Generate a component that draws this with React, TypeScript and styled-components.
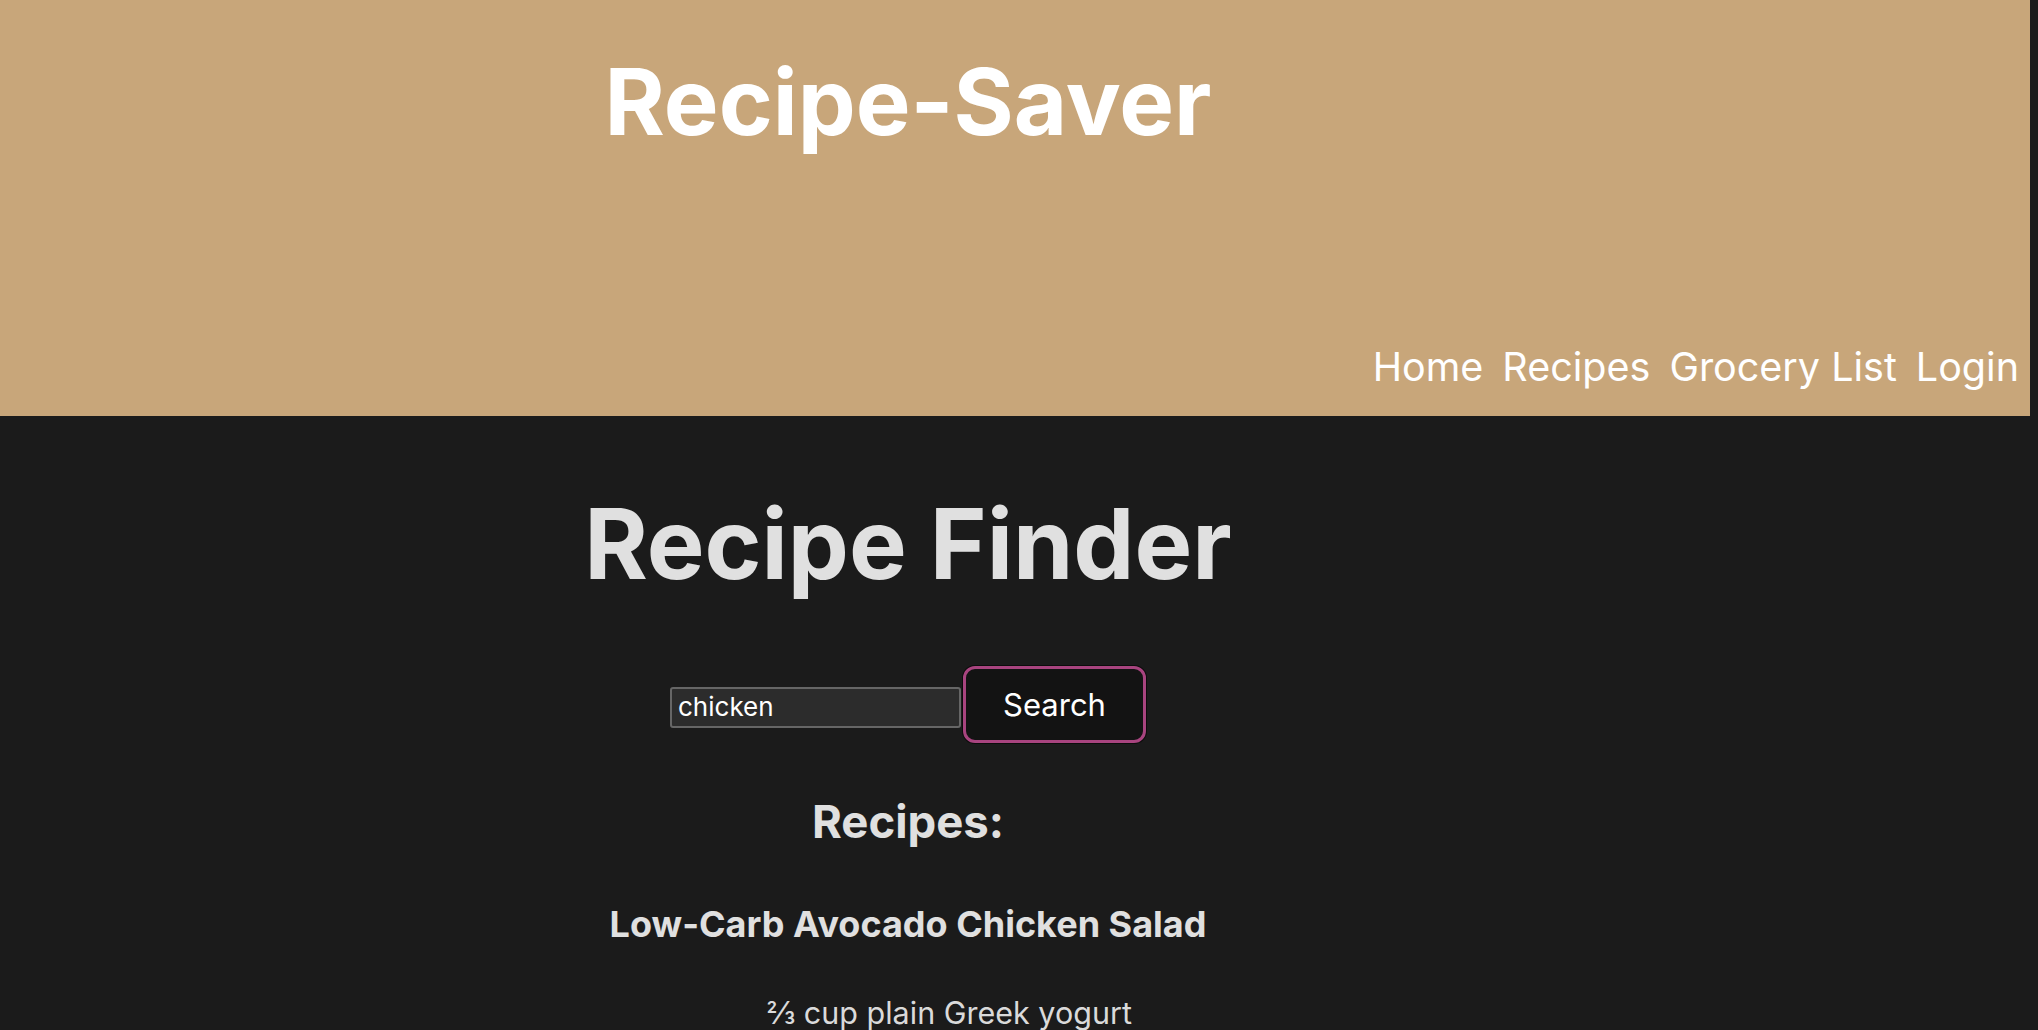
import React from "react";
import styled, { createGlobalStyle } from "styled-components";

const Global = createGlobalStyle`
  html, body {
    margin: 0;
    padding: 0;
    background: #1b1b1b;
    font-family: Inter, "Noto Sans", sans-serif;
  }
`;

const Header = styled.header`
  box-sizing: border-box;
  width: calc(100vw - 8px);
  height: 416px;
  background: #c8a67a;
  display: flex;
  flex-direction: column;
  padding-top: 56px;
`;

const Column = styled.div`
  width: 1800px;
  margin-left: 8px;
  text-align: center;
`;

const SiteTitle = styled.h1`
  margin: 0;
  font-size: 92px;
  line-height: 1;
  font-weight: 700;
  color: #ffffff;
`;

const Nav = styled.nav`
  margin-top: auto;
  align-self: flex-end;
  display: flex;
  gap: 19px;
  padding: 0 11px 29px 0;
`;

const NavLink = styled.a`
  font-size: 39.5px;
  line-height: 1;
  color: #ffffff;
  text-decoration: none;
`;

const Main = styled.main`
  padding-top: 79px;
`;

const PageTitle = styled.h1`
  margin: 0;
  font-size: 97px;
  line-height: 1;
  font-weight: 700;
  color: #e0e0e0;
`;

const SearchRow = styled.form`
  margin-top: 74px;
  display: flex;
  justify-content: center;
  align-items: baseline;
  gap: 2px;
`;

const SearchInput = styled.input`
  box-sizing: border-box;
  width: 291px;
  height: 41px;
  padding: 3px 6px 5px;
  border: 2px solid #666666;
  border-radius: 3px;
  background: #2c2c2c;
  color: #ffffff;
  font-family: Inter, sans-serif;
  font-size: 26px;
  line-height: 29px;
  outline: none;
`;

const SearchButton = styled.button`
  box-sizing: border-box;
  width: 183px;
  height: 77px;
  padding: 0;
  border: 3px solid #a8447f;
  border-radius: 12px;
  box-shadow: 0 0 0 1px #0c0c0c;
  background: #131313;
  color: #ffffff;
  font-family: Inter, sans-serif;
  font-size: 31px;
  line-height: 33px;
  cursor: pointer;
`;

const SectionTitle = styled.h2`
  margin: 56px 0 0;
  font-size: 45.5px;
  line-height: 1;
  font-weight: 700;
  color: #e0e0e0;
`;

const RecipeName = styled.h3`
  margin: 61px 0 0;
  font-size: 36px;
  line-height: 1;
  font-weight: 700;
  color: #e0e0e0;
`;

const Ingredients = styled.ul`
  margin: 56px 0 0;
  padding: 0 0 0 82px;
  list-style: none;
`;

const Ingredient = styled.li`
  font-size: 30.5px;
  line-height: 1;
  color: #dadada;
  margin-bottom: 14px;
`;

export default function App() {
  return (
    <>
      <Global />
      <Header>
        <Column>
          <SiteTitle>Recipe-Saver</SiteTitle>
        </Column>
        <Nav>
          <NavLink href="#">Home</NavLink>
          <NavLink href="#">Recipes</NavLink>
          <NavLink href="#">Grocery List</NavLink>
          <NavLink href="#">Login</NavLink>
        </Nav>
      </Header>
      <Main>
        <Column>
          <PageTitle>Recipe Finder</PageTitle>
          <SearchRow onSubmit={(e) => e.preventDefault()}>
            <SearchInput type="text" defaultValue="chicken" />
            <SearchButton type="submit">Search</SearchButton>
          </SearchRow>
          <SectionTitle>Recipes:</SectionTitle>
          <RecipeName>Low-Carb Avocado Chicken Salad</RecipeName>
          <Ingredients>
            <Ingredient>⅔ cup plain Greek yogurt</Ingredient>
            <Ingredient>1 ripe avocado</Ingredient>
          </Ingredients>
        </Column>
      </Main>
    </>
  );
}
